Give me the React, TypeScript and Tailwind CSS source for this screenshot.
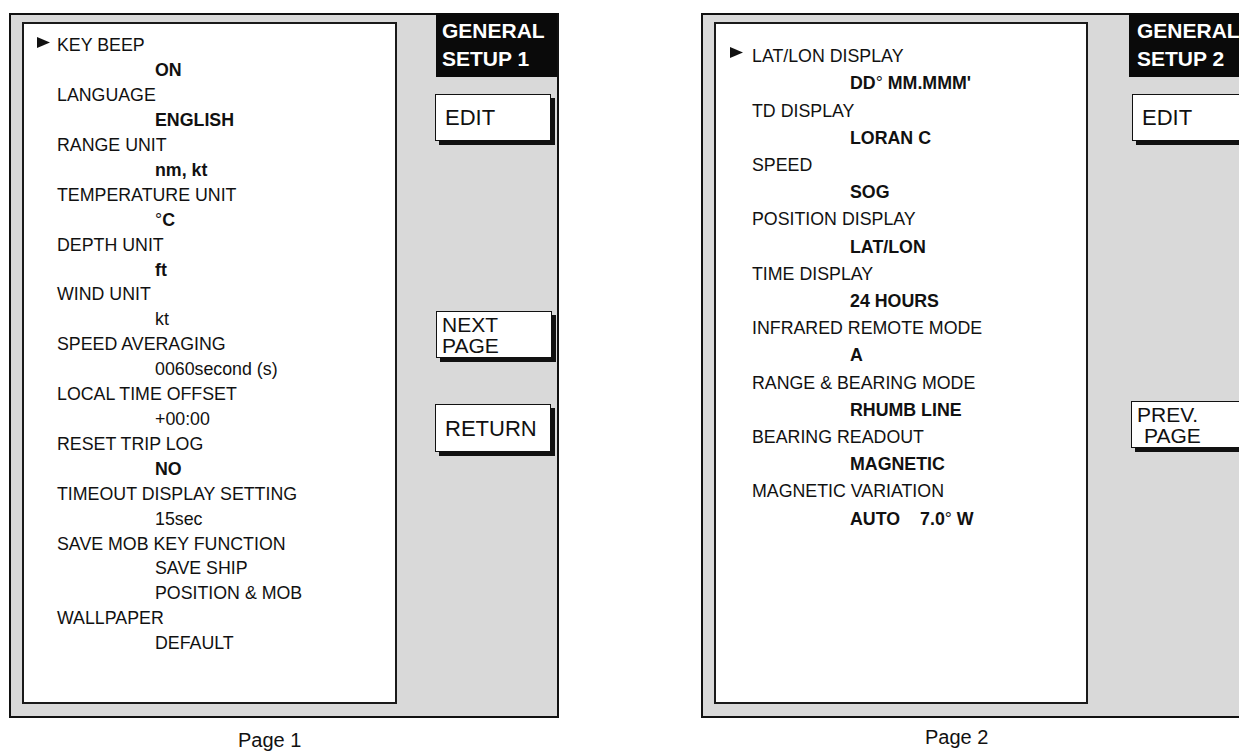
import React from "react";

function Arrow() {
  return (
    <svg width="13" height="11" viewBox="0 0 13 11" className="block">
      <path d="M0 0 L13 5.5 L0 11 Z" fill="#111" />
    </svg>
  );
}

type Row = { kind: "label" | "value"; content: React.ReactNode; arrow?: boolean };

const deg = <span className="font-normal">°</span>;

const rows1: Row[] = [
  { kind: "label", content: "KEY BEEP", arrow: true },
  { kind: "value", content: <b>ON</b> },
  { kind: "label", content: "LANGUAGE" },
  { kind: "value", content: <b>ENGLISH</b> },
  { kind: "label", content: "RANGE UNIT" },
  { kind: "value", content: <b>nm, kt</b> },
  { kind: "label", content: "TEMPERATURE UNIT" },
  { kind: "value", content: <span>°<b>C</b></span> },
  { kind: "label", content: "DEPTH UNIT" },
  { kind: "value", content: <b>ft</b> },
  { kind: "label", content: "WIND UNIT" },
  { kind: "value", content: "kt" },
  { kind: "label", content: "SPEED AVERAGING" },
  { kind: "value", content: "0060second (s)" },
  { kind: "label", content: "LOCAL TIME OFFSET" },
  { kind: "value", content: "+00:00" },
  { kind: "label", content: "RESET TRIP LOG" },
  { kind: "value", content: <b>NO</b> },
  { kind: "label", content: "TIMEOUT DISPLAY SETTING" },
  { kind: "value", content: "15sec" },
  { kind: "label", content: "SAVE MOB KEY FUNCTION" },
  { kind: "value", content: "SAVE SHIP" },
  { kind: "value", content: "POSITION & MOB" },
  { kind: "label", content: "WALLPAPER" },
  { kind: "value", content: "DEFAULT" },
];

const rows2: Row[] = [
  { kind: "label", content: "LAT/LON DISPLAY", arrow: true },
  { kind: "value", content: <b>DD{deg} MM.MMM'</b> },
  { kind: "label", content: "TD DISPLAY" },
  { kind: "value", content: <b>LORAN C</b> },
  { kind: "label", content: "SPEED" },
  { kind: "value", content: <b>SOG</b> },
  { kind: "label", content: "POSITION DISPLAY" },
  { kind: "value", content: <b>LAT/LON</b> },
  { kind: "label", content: "TIME DISPLAY" },
  { kind: "value", content: <b>24 HOURS</b> },
  { kind: "label", content: "INFRARED REMOTE MODE" },
  { kind: "value", content: <b>A</b> },
  { kind: "label", content: "RANGE & BEARING MODE" },
  { kind: "value", content: <b>RHUMB LINE</b> },
  { kind: "label", content: "BEARING READOUT" },
  { kind: "value", content: <b>MAGNETIC</b> },
  { kind: "label", content: "MAGNETIC VARIATION" },
  {
    kind: "value",
    content: (
      <b>
        AUTO<span className="ml-[20px]">7.0{deg} W</span>
      </b>
    ),
  },
];

function Button({
  children,
  className,
  single = true,
}: {
  children: React.ReactNode;
  className: string;
  single?: boolean;
}) {
  return (
    <div
      className={`bg-white border border-[#111] shadow-[4px_4px_0_#111] text-[#111] ${
        single
          ? "flex items-center pl-[9px] text-[22px]"
          : "pt-[2px] pl-[5px] text-[21px] leading-[21px]"
      } ${className}`}
    >
      {children}
    </div>
  );
}

export default function App() {
  return (
    <div className="w-[1239px] h-[751px] bg-white overflow-hidden [font-family:'Liberation_Sans',Arial,Helvetica,sans-serif] text-[#111]">
      <div className="flex pl-[9px] pt-[13px] gap-[142px]">
        {/* Panel 1 */}
        <div className="flex flex-col shrink-0">
          <div className="w-[550px] h-[705px] border-2 border-[#111] bg-[#d9d9d9] flex">
            <div className="ml-[11px] mt-[7px] w-[375px] h-[682px] border-2 border-[#1a1a1a] bg-white pt-[9.4px] text-[17.8px] leading-[24.9px]">
              {rows1.map((r, i) =>
                r.kind === "label" ? (
                  <div key={i} className="flex items-start pl-[13px]">
                    <div className="w-[20px] pt-[4px]">{r.arrow ? <Arrow /> : null}</div>
                    <div>{r.content}</div>
                  </div>
                ) : (
                  <div key={i} className="pl-[131px]">
                    {r.content}
                  </div>
                )
              )}
            </div>
            <div className="flex flex-col w-[160px]">
              <div className="ml-[39px] w-[121px] h-[64px] -mt-[2px] bg-[#0a0a0a] text-white font-bold text-[21px] leading-[28px] pt-[4px] pl-[6px]">
                <div>GENERAL</div>
                <div>SETUP 1</div>
              </div>
              <Button className="ml-[38px] mt-[17px] w-[116px] h-[47px]">EDIT</Button>
              <Button single={false} className="ml-[39px] mt-[170px] w-[116px] h-[47px]">
                <div>NEXT</div>
                <div>PAGE</div>
              </Button>
              <Button className="ml-[38px] mt-[46px] w-[116px] h-[48px]">RETURN</Button>
            </div>
          </div>
          <div className="mt-[13px] pl-[229px] text-[20px] leading-[18px]">Page 1</div>
        </div>

        {/* Panel 2 */}
        <div className="flex flex-col shrink-0">
          <div className="w-[550px] h-[705px] border-2 border-[#111] bg-[#d9d9d9] flex">
            <div className="ml-[11px] mt-[7px] w-[374px] h-[682px] border-2 border-[#1a1a1a] bg-white pt-[19.2px] text-[17.8px] leading-[27.2px]">
              {rows2.map((r, i) =>
                r.kind === "label" ? (
                  <div key={i} className="flex items-start pl-[14px]">
                    <div className="w-[22px] pt-[4px]">{r.arrow ? <Arrow /> : null}</div>
                    <div>{r.content}</div>
                  </div>
                ) : (
                  <div key={i} className="pl-[134px]">
                    {r.content}
                  </div>
                )
              )}
            </div>
            <div className="flex flex-col w-[161px]">
              <div className="ml-[41px] w-[120px] h-[64px] -mt-[2px] bg-[#0a0a0a] text-white font-bold text-[21px] leading-[28px] pt-[4px] pl-[8px]">
                <div>GENERAL</div>
                <div>SETUP 2</div>
              </div>
              <Button className="ml-[44px] mt-[17px] w-[116px] h-[47px]">EDIT</Button>
              <Button single={false} className="ml-[43px] mt-[260px] w-[116px] h-[47px]">
                <div>PREV.</div>
                <div className="pl-[7px]">PAGE</div>
              </Button>
            </div>
          </div>
          <div className="mt-[10px] pl-[224px] text-[20px] leading-[18px]">Page 2</div>
        </div>
      </div>
    </div>
  );
}
